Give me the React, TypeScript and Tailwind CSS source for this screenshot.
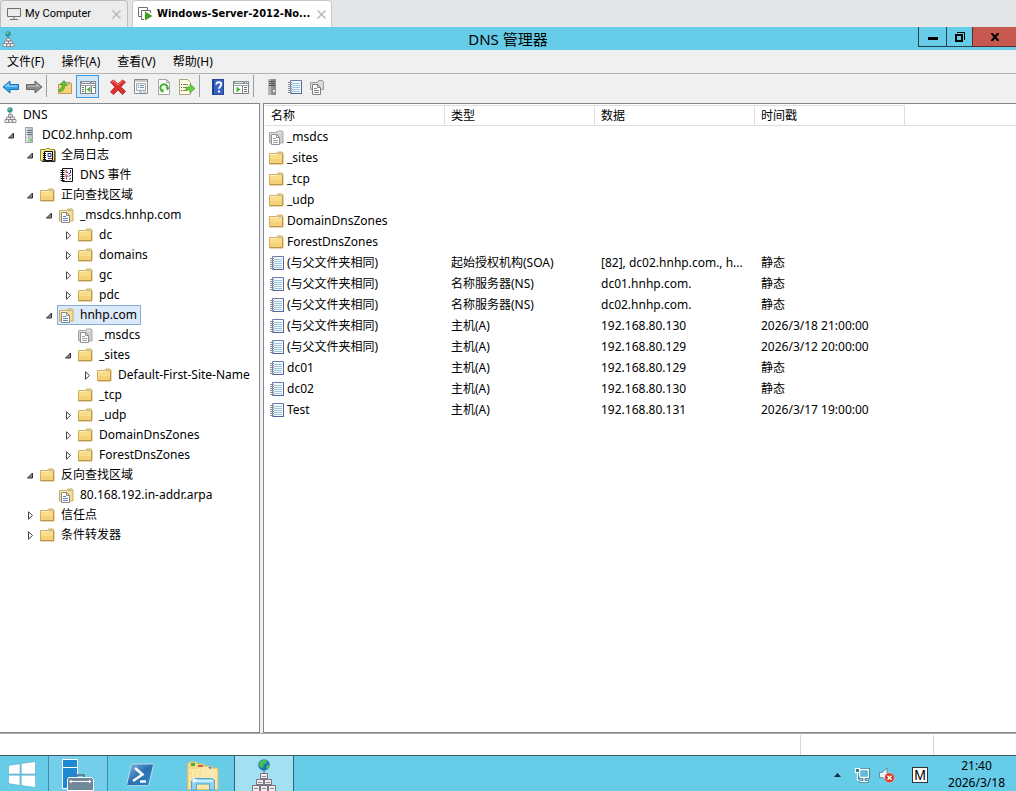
import React, { useState } from "react";
import clsx from "clsx";

type IconProps = { className?: string };

/* ---------- small icons used by the tree and the record list ---------- */

const FolderIcon = () => (
  <svg width="16" height="16" viewBox="0 0 16 16" className="shrink-0">
    <path d="M.5 3.500h7l1-1.500h4.500l1 1v11H.5z" fill="#f9dd8b" stroke="#d3ad62" />
    <path d="M9 3.500h3.500" stroke="#9fb9ba" />
    <path d="M1 4.500h6.500" stroke="#fdf0c0" />
    <path d="M1 9h12.500v4.500H1z" fill="#f5d178" />
    <path d="M13.500 4v9.500H.5" fill="none" stroke="#bb964c" />
  </svg>
);

const ZoneIcon = ({ gray }: { gray?: boolean }) => (
  <svg width="16" height="16" viewBox="0 0 16 16" className="shrink-0">
    <path
      d="M.5 3.500h7l1-1.500h4.500l1 1v11H.5z"
      fill={gray ? "#cfcfcf" : "#f6dc93"}
      stroke={gray ? "#a6a6a6" : "#cdaa60"}
    />
    <path d="M9 3.500h3.500" stroke={gray ? "#eeeeee" : "#9fb9ba"} />
    <path d="M1 4.500h6.500" stroke={gray ? "#e2e2e2" : "#fdf0c0"} />
    <path
      d="M2.500 5.500h5l3 3v7h-8z"
      fill="#fff"
      stroke={gray ? "#909090" : "#8b8a85"}
    />
    <path d="M7.500 5.500v3h3" fill="none" stroke={gray ? "#909090" : "#8b8a85"} />
    <path
      d="M4 9.500h3M4 11.500h5M4 13.500h5"
      stroke={gray ? "#a0a0a0" : "#5c86c4"}
    />
  </svg>
);

const RecordIcon = () => (
  <svg width="16" height="16" viewBox="0 0 16 16" className="shrink-0">
    <path d="M3.500 1.500h11v13h-11z" fill="#f4fbfe" stroke="#6c7bab" />
    <path d="M14.500 2v12.500H4" fill="none" stroke="#55639a" />
    <path
      d="M5 4.500h8M5 6.500h8M5 8.500h8M5 10.500h8M5 12.500h8"
      stroke="#9cc6d8"
    />
    <path
      d="M1 3.500h4M1 5.500h4M1 7.500h4M1 9.500h4M1 11.500h4M1 13.500h4"
      stroke="#8d8d96"
    />
  </svg>
);

const DnsIcon = () => (
  <svg width="16" height="16" viewBox="0 0 16 16" className="shrink-0">
    <circle cx="8" cy="3" r="2.7" fill="#2b8aa8" />
    <path d="M6 1.6l2-1 1 1.4-1.4 1.6-1.4-.4zM8.5 4l1.8-.8-.6 1.8z" fill="#63cf6f" />
    <path d="M8 6v2" stroke="#77808a" />
    <path
      d="M6.500 7.500h4v2.500h-4zM4.500 10h4v2.500h-4zM8.500 10h4v2.500h-4zM3 12.500h3.700v3H3zM6.700 12.500h3.600v3H6.700zM10.300 12.500H14v3h-3.700z"
      fill="#f0eef0"
      stroke="#8b8891"
      strokeWidth=".9"
    />
  </svg>
);

const ServerIcon = () => (
  <svg width="16" height="16" viewBox="0 0 16 16" className="shrink-0">
    <path d="M4.500.500h7v15h-7z" fill="#b9c4cb" stroke="#9aa4ab" />
    <path d="M5 1h2v14H5z" fill="#dbe2e6" />
    <path d="M6 3.500h5M6 5.500h5M6 7.500h5" stroke="#6b787f" />
    <path d="M9 12h2v2H9z" fill="#76d13a" />
  </svg>
);

const LogFolderIcon = () => (
  <svg width="16" height="16" viewBox="0 0 16 16" className="shrink-0">
    <path d="M.5 2.500h5l1-1h3l1 1h4v11H.5z" fill="#f3ea7e" stroke="#8f8f37" />
    <path d="M15 3.500v11H2" fill="none" stroke="#222" />
    <path d="M4.500 4.500h8v9h-8z" fill="#fff" stroke="#111" />
    <path d="M3 6.500h3M3 8.500h3M3 10.500h3M3 12.500h3" stroke="#111" />
    <path d="M8 6.500h3v3H8zM8 11.500h2" stroke="#2b2f9a" fill="#fff" />
    <path d="M10 11.500h2" stroke="#c22" />
  </svg>
);

const EventIcon = () => (
  <svg width="16" height="16" viewBox="0 0 16 16" className="shrink-0">
    <path d="M3.500 1.500h10v13h-10z" fill="#fff" stroke="#111" />
    <path
      d="M1.500 3.500h4M1.500 5.500h4M1.500 7.500h4M1.500 9.500h4M1.500 11.500h4M1.500 13.500h4"
      stroke="#111"
    />
    <path d="M7 3v2.500h2M7 7v3l2-1.500M7.500 10.500v2" fill="none" stroke="#c0263a" />
    <path d="M11.500 3v3l-2 1M9.500 9.500l2.500-1.500M10 12.500l2-1.500" fill="none" stroke="#2b2f9a" />
  </svg>
);

const ICONS = {
  dns: <DnsIcon />,
  server: <ServerIcon />,
  logs: <LogFolderIcon />,
  event: <EventIcon />,
  folder: <FolderIcon />,
  zone: <ZoneIcon />,
  grayZone: <ZoneIcon gray />,
  record: <RecordIcon />,
};

/* ---------- toolbar icons ---------- */

const BackIcon = () => (
  <svg width="18" height="16" viewBox="0 0 18 16">
    <path d="M1 8l7-6v3.500h8.500v5H8V14z" fill="#35a3ea" stroke="#1d6db5" />
    <path d="M2.500 7.800L7 4v2.500h8.500v1.300z" fill="#8fd3fa" />
  </svg>
);

const ForwardIcon = () => (
  <svg width="18" height="16" viewBox="0 0 18 16">
    <path d="M17 8l-7-6v3.500H1.500v5H10V14z" fill="#8c8c8c" stroke="#636363" />
    <path d="M15.500 7.800L11 4v2.500H2.500v1.300z" fill="#b5b5b5" />
  </svg>
);

const UpIcon = () => (
  <svg width="16" height="16" viewBox="0 0 16 16">
    <path d="M1.500 5.500h5l1-2h6l1 1v10h-13z" fill="#f4d27c" stroke="#c09a4d" />
    <path d="M10 5h3" stroke="#7aa7c0" />
    <path d="M2.500 12.500c3 0 5-1.500 5-6h2.500L7 1.500 3 5.500h2.300c0 3-1 4.500-3.300 5.300z" fill="#5fc63a" stroke="#3a8f22" strokeWidth=".7" />
  </svg>
);

const PaneIcon = ({ right }: { right?: boolean }) => (
  <svg width="18" height="16" viewBox="0 0 18 16">
    <path d="M1.500 2.500h15v12h-15z" fill="#fdfdfd" stroke="#7d8488" />
    <path d="M1 2h16v3H1z" fill="#8a9297" />
    <path d="M3 3.500h8" stroke="#dfe5e8" />
    <path d="M13 3.500h3" stroke="#fff" strokeDasharray="1 1" />
    <path d="M2 6.500h14" stroke="#9aa2a6" />
    {right ? (
      <>
        <path d="M10.500 7v7" stroke="#7d8488" />
        <path d="M4.500 7.500l4 3-4 3z" fill="#46b83a" />
        <path d="M12 8.500h3M12 10.500h3M12 12.500h3" stroke="#6b7377" />
      </>
    ) : (
      <>
        <path d="M6.500 7v7M12.500 7v7" stroke="#7d8488" />
        <path d="M11.500 7.500l-4 3 4 3z" fill="#46b83a" />
        <path d="M3 8.500h2M3 10.500h2M3 12.500h2M14 8.500h2" stroke="#6b7377" />
      </>
    )}
  </svg>
);

const DeleteIcon = () => (
  <svg width="18" height="16" viewBox="0 0 18 16">
    <path
      d="M1.500 3l3-2L9 5l4.500-4 3 2-4.700 5 4.700 4.500-3 3L9 11l-4.500 4.500-3-2.500L6 8z"
      fill="#e0302b"
      stroke="#b11b1b"
      strokeWidth=".8"
    />
    <path d="M3 3l1.500-1L9 6l4.500-4" fill="none" stroke="#f58a80" />
  </svg>
);

const PropertiesIcon = () => (
  <svg width="16" height="16" viewBox="0 0 16 16">
    <path d="M1.500.500h13v14h-13z" fill="#fff" stroke="#8a8a8a" />
    <path d="M2 1h12v2H2z" fill="#c9c9c9" />
    <path d="M3.500 4.500h9v7h-9z" fill="#eef4f8" stroke="#a6a6a6" />
    <path d="M5 6.500h1M5 8.500h1M7 6.500h4M7 8.500h4" stroke="#7896ab" />
    <path d="M6 13h3" stroke="#49a7d6" />
    <path d="M10 13h3" stroke="#9a9a9a" />
  </svg>
);

const RefreshIcon = () => (
  <svg width="16" height="16" viewBox="0 0 16 16">
    <path d="M2.500.5h8l3 3v12h-11z" fill="#fdfdfd" stroke="#a6a69e" />
    <path d="M10.500.5v3h3" fill="none" stroke="#a6a69e" />
    <path d="M6 11.800A3.600 3.600 0 1 1 11.600 9" fill="none" stroke="#45b031" strokeWidth="2" />
    <path d="M7.500 9.500v4l-3.300-1z" fill="#45b031" />
    <path d="M9.300 8.500h4.500l-2.200 3z" fill="#45b031" />
  </svg>
);

const ExportIcon = () => (
  <svg width="16" height="16" viewBox="0 0 16 16">
    <path d="M.5.500h8l3 3v12H.5z" fill="#fffbe2" stroke="#aaa383" />
    <path d="M2 5.500h1M2 8.500h1M2 11.500h1" stroke="#444" />
    <path d="M4 5.500h5M4 8.500h3M4 11.500h4" stroke="#837e68" />
    <path d="M7 8h4V5l5 4.500-5 4.500v-3H7z" fill="#69ce3f" stroke="#3f9d27" strokeWidth=".7" />
  </svg>
);

const HelpIcon = () => (
  <svg width="16" height="16" viewBox="0 0 16 16">
    <path d="M2 0h12v16H2z" fill="#3a62c4" />
    <path d="M2 0h2v16H2z" fill="#1f3c8c" />
    <path d="M2.500.5h11v15h-11z" fill="none" stroke="#26469c" />
    <path
      d="M6.300 5.500c0-3 5-3 5 0 0 2-2.300 2-2.300 4.300"
      fill="none"
      stroke="#fff"
      strokeWidth="1.800"
    />
    <path d="M8 11.500h2v2H8z" fill="#fff" />
  </svg>
);

const GrayServerIcon = () => (
  <svg width="16" height="16" viewBox="0 0 16 16">
    <path d="M4 0h8v16H4z" fill="#8e8e8e" />
    <path d="M4 0h3v16H4z" fill="#b4b4b4" />
    <path d="M5 2.500h6M5 4.500h6M5 6.500h6" stroke="#4f4f4f" />
    <path d="M9 11h2v2H9z" fill="#e9e9e9" />
  </svg>
);

const CopyZoneIcon = () => (
  <svg width="16" height="16" viewBox="0 0 16 16">
    <path d="M1.500 3.500h7l1-2h4l1 1v8h-13z" fill="#dadada" stroke="#9d9d9d" />
    <path d="M3.500 5.500h5l3 3v7h-8z" fill="#fff" stroke="#808080" />
    <path d="M8.500 5.500v3h3" fill="none" stroke="#808080" />
    <path d="M5 9.500h3M5 11.500h5M5 13.500h5" stroke="#8a8a8a" />
  </svg>
);

/* ---------- taskbar icons ---------- */

const WindowsLogo = () => (
  <svg width="28" height="27" viewBox="0 0 28 27">
    <path
      d="M.5 4.500L12 2.700v10.300H.500zM13.200 2.500L27.500.5V13H13.200zM.5 14.200H12v10.200L.5 22.600zM13.200 14.200h14.300v12.300l-14.300-2z"
      fill="#fff"
      stroke="#4a9dbb"
      strokeWidth=".5"
    />
  </svg>
);

const ServerManagerIcon = () => (
  <svg width="32" height="32" viewBox="0 0 32 32">
    <path d="M.5.500h15v29H.5z" fill="#1e88d2" stroke="#fff" />
    <path d="M1 8.500h14" stroke="#fff" />
    <path d="M15 18v-2h7v2" fill="none" stroke="#55707f" strokeWidth="1.500" />
    <path d="M6.500 18.500h23l2 2v11h-26v-11z" fill="#71889a" stroke="#fff" />
    <path d="M8 22.500h20" stroke="#fff" />
    <path d="M9.500 20.500l-2.500 2 2.500 2zM27 20.500l2.500 2-2.500 2z" fill="#fff" />
  </svg>
);

const PowerShellIcon = () => (
  <svg width="28" height="24" viewBox="0 0 28 24">
    <defs>
      <linearGradient id="ps" x1="0" y1="0" x2="1" y2="1">
        <stop offset="0" stopColor="#7fb9e2" />
        <stop offset=".5" stopColor="#2c6fae" />
        <stop offset="1" stopColor="#2d8bd0" />
      </linearGradient>
    </defs>
    <path
      d="M7 1h19c1 0 1.500.8 1.300 1.800L23 21c-.3 1-1 1.700-2 1.700H2c-1 0-1.500-.8-1.200-1.800L5 2.700C5.300 1.600 6 1 7 1z"
      fill="url(#ps)"
      stroke="#b9def2"
    />
    <path d="M9 5l7.500 6.500L7 18" fill="none" stroke="#fff" strokeWidth="2.600" />
    <path d="M14 18.500h6" stroke="#fff" strokeWidth="2.400" />
  </svg>
);

const ExplorerIcon = () => (
  <svg width="34" height="30" viewBox="0 0 34 30">
    <path d="M1.500 3l2-2h7l2 2h5l1 2h6l2 2h5.500v21.500h-30.500z" fill="#f3d983" stroke="#dcbd6c" />
    <path d="M5 2h4v3H5z" fill="#3fae4a" />
    <path d="M12 4h5v2h-5z" fill="#d35a4b" />
    <path d="M21 6h4v2h-4z" fill="#3a8fc8" />
    <path d="M3 8h9l2-2h8l2 2h7v20H3z" fill="#fae9ab" />
    <path d="M5 10v17M9 9.500v9M14 9v9" stroke="#f0d587" />
    <path d="M5.500 29V19l3-1.500h17l3 1.500v10h-5v-6H10.500v6z" fill="#8fd3f0" stroke="#4fa6cf" />
    <path d="M7 20h20" stroke="#e1f6ff" strokeWidth="1.500" />
    <path d="M8 16v6M5 19h6" stroke="#fff" />
  </svg>
);

const DnsTaskIcon = () => (
  <svg width="26" height="33" viewBox="0 0 26 33">
    <circle cx="13" cy="6" r="5.800" fill="#1f6fc0" />
    <path d="M9 2.500l4-2 3 1-1 3-3 1.500 1 2-3 1-2.500-3zM15 7l3.500-2-.5 4-2.500 2z" fill="#43c251" />
    <path d="M13 12v2" stroke="#667" />
    <g fill="#f1edf1" stroke="#77717c">
      <path d="M9.500 14.500h7v5h-7z" />
      <path d="M5.500 20.500h7v5h-7zM13.500 20.500h7v5h-7z" />
      <path d="M1.500 26.500h7v6h-7zM9.500 26.500h7v6h-7zM17.500 26.500h7v6h-7z" />
    </g>
    <path d="M11 17.500h4M7 23.500h4M15 23.500h4M3 29.500h4M11 29.500h4M19 29.500h4" stroke="#8d8792" />
  </svg>
);

const NetworkIcon = () => (
  <svg width="16" height="16" viewBox="0 0 16 16">
    <path d="M5.500 2.500h9v8h-9z" fill="#5fb9da" stroke="#23586c" strokeWidth="2.600" />
    <path d="M10 11v3M5.500 14.500h9" stroke="#23586c" strokeWidth="2.600" />
    <path d="M5.500 2.500h9v8h-9z" fill="#5fb9da" stroke="#fff" strokeWidth="1.300" />
    <path d="M10 11v3M6 14.500h8" stroke="#fff" strokeWidth="1.300" />
    <path d="M1.500 1.500h4v4h-4zM3.500 6v7h3" fill="#2b6f8c" stroke="#fff" strokeWidth="1.200" />
  </svg>
);

const MutedIcon = () => (
  <svg width="18" height="16" viewBox="0 0 18 16">
    <path d="M1.500 5.500h3L9 .8v14l-4.500-4.300h-3z" fill="#eef7fb" stroke="#5b7784" strokeWidth=".8" />
    <circle cx="11.500" cy="10.800" r="4.900" fill="#d8392c" stroke="#f4c9c3" strokeWidth=".6" />
    <path d="M9.500 8.800l4 4M13.500 8.800l-4 4" stroke="#fff" strokeWidth="1.500" />
  </svg>
);

/* ---------- data ---------- */

type TreeNode = {
  id: string;
  label: string;
  icon: keyof typeof ICONS;
  closed?: boolean;
  children?: TreeNode[];
};

const tree: TreeNode[] = [
  {
    id: "dc02",
    label: "DC02.hnhp.com",
    icon: "server",
    children: [
      {
        id: "logs",
        label: "全局日志",
        icon: "logs",
        children: [{ id: "events", label: "DNS 事件", icon: "event" }],
      },
      {
        id: "forward",
        label: "正向查找区域",
        icon: "folder",
        children: [
          {
            id: "msdcs-zone",
            label: "_msdcs.hnhp.com",
            icon: "zone",
            children: [
              { id: "dc", label: "dc", icon: "folder", closed: true },
              { id: "domains", label: "domains", icon: "folder", closed: true },
              { id: "gc", label: "gc", icon: "folder", closed: true },
              { id: "pdc", label: "pdc", icon: "folder", closed: true },
            ],
          },
          {
            id: "hnhp",
            label: "hnhp.com",
            icon: "zone",
            children: [
              { id: "msdcs", label: "_msdcs", icon: "grayZone" },
              {
                id: "sites",
                label: "_sites",
                icon: "folder",
                children: [
                  {
                    id: "default-site",
                    label: "Default-First-Site-Name",
                    icon: "folder",
                    closed: true,
                  },
                ],
              },
              { id: "tcp", label: "_tcp", icon: "folder" },
              { id: "udp", label: "_udp", icon: "folder", closed: true },
              { id: "ddz", label: "DomainDnsZones", icon: "folder", closed: true },
              { id: "fdz", label: "ForestDnsZones", icon: "folder", closed: true },
            ],
          },
        ],
      },
      {
        id: "reverse",
        label: "反向查找区域",
        icon: "folder",
        children: [{ id: "arpa", label: "80.168.192.in-addr.arpa", icon: "zone" }],
      },
      { id: "trust", label: "信任点", icon: "folder", closed: true },
      { id: "forwarders", label: "条件转发器", icon: "folder", closed: true },
    ],
  },
];

type Row = [keyof typeof ICONS, string, string, string, string];

const rows: Row[] = [
  ["grayZone", "_msdcs", "", "", ""],
  ["folder", "_sites", "", "", ""],
  ["folder", "_tcp", "", "", ""],
  ["folder", "_udp", "", "", ""],
  ["folder", "DomainDnsZones", "", "", ""],
  ["folder", "ForestDnsZones", "", "", ""],
  ["record", "(与父文件夹相同)", "起始授权机构(SOA)", "[82], dc02.hnhp.com., h...", "静态"],
  ["record", "(与父文件夹相同)", "名称服务器(NS)", "dc01.hnhp.com.", "静态"],
  ["record", "(与父文件夹相同)", "名称服务器(NS)", "dc02.hnhp.com.", "静态"],
  ["record", "(与父文件夹相同)", "主机(A)", "192.168.80.130", "2026/3/18 21:00:00"],
  ["record", "(与父文件夹相同)", "主机(A)", "192.168.80.129", "2026/3/12 20:00:00"],
  ["record", "dc01", "主机(A)", "192.168.80.129", "静态"],
  ["record", "dc02", "主机(A)", "192.168.80.130", "静态"],
  ["record", "Test", "主机(A)", "192.168.80.131", "2026/3/17 19:00:00"],
];

/* ---------- components ---------- */

const Arrow = ({ open }: { open: boolean }) => (
  <svg width="9" height="9" viewBox="0 0 9 9">
    {open ? (
      <path d="M6.500 2v5h-5z" fill="#8a8a8a" stroke="#333" />
    ) : (
      <path d="M2.500.8v7.400l4-3.700z" fill="#fff" stroke="#444" />
    )}
  </svg>
);

const TreeItem = ({
  node,
  selected,
  onSelect,
}: {
  node: TreeNode;
  selected: string;
  onSelect: (id: string) => void;
}) => {
  const [open, setOpen] = useState(!node.closed);
  const expandable = node.closed || !!node.children;

  return (
    <li>
      <div className="flex h-5 items-center">
        <div className="flex w-[19px] shrink-0 items-center pl-[7px]">
          {expandable && (
            <button aria-label={`${node.label} toggle`} onClick={() => setOpen(!open)}>
              <Arrow open={open} />
            </button>
          )}
        </div>
        <button
          onClick={() => onSelect(node.id)}
          className={clsx(
            "flex h-5 items-center gap-[5px] border pl-px pr-[3px] whitespace-nowrap",
            selected === node.id
              ? "border-[#84acdd] bg-[#dbe9f9]"
              : "border-transparent"
          )}
        >
          {ICONS[node.icon]}
          {node.label}
        </button>
      </div>
      {open && node.children && (
        <ul className="pl-[19px]">
          {node.children.map((child) => (
            <TreeItem
              key={child.id}
              node={child}
              selected={selected}
              onSelect={onSelect}
            />
          ))}
        </ul>
      )}
    </li>
  );
};

const ToolButton = ({
  label,
  active,
  narrow,
  children,
}: {
  label: string;
  active?: boolean;
  narrow?: boolean;
  children: React.ReactNode;
}) => (
  <button
    aria-label={label}
    className={clsx(
      "flex h-[23px] items-center justify-center border",
      narrow ? "w-[22px]" : "w-[23px]",
      active ? "border-[#3c9be0] bg-[#cfe6f8]" : "border-transparent"
    )}
  >
    {children}
  </button>
);

const Separator = () => <div className="ml-px mr-1.5 h-[22px] w-px bg-[#a0a0a0]" />;

const CloseMark = ({ className }: IconProps) => (
  <svg width="9" height="9" viewBox="0 0 9 9" className={className}>
    <path d="M.5.500l8 8M8.500.500l-8 8" stroke="#b9b9b9" strokeWidth="1.500" />
  </svg>
);

const App = () => {
  const [selected, setSelected] = useState("hnhp");

  return (
    <div className="flex h-screen flex-col overflow-hidden bg-[#f0f0f0] font-['Noto_Sans','Noto_Sans_CJK_SC',sans-serif] text-xs leading-5 text-black">
      {/* machine tabs */}
      <div className="flex h-[27px] shrink-0 bg-[#e4e5e7]">
        <div className="flex w-32 items-center rounded-t border border-b-0 border-[#bcbcbc] bg-[#ececed] px-1.5 font-['Roboto',sans-serif] text-[11px]">
          <svg width="14" height="12" viewBox="0 0 14 12" className="shrink-0">
            <path d="M.5.500h13v8H.500zM3 11.500h8M7 9v2" fill="none" stroke="#6e6e6e" />
          </svg>
          <button className="flex-1 pl-1 text-left whitespace-nowrap">My Computer</button>
          <button aria-label="close My Computer">
            <CloseMark />
          </button>
        </div>
        <div className="ml-1 flex w-[200px] items-center rounded-t border border-b-0 border-[#c8c8c8] bg-white px-[5px] font-['DejaVu_Sans_Condensed','DejaVu_Sans',sans-serif] text-[11px] font-bold">
          <svg width="15" height="14" viewBox="0 0 15 14" className="shrink-0">
            <path d="M3 9.500H.500v-9h9V3" fill="none" stroke="#6e6e6e" />
            <path d="M6 12.500H3.500v-9h9V6" fill="none" stroke="#6e6e6e" />
            <path d="M7 4.500l7.500 4.500L7 13.500z" fill="#3fa01e" />
          </svg>
          <button className="flex-1 pl-1 text-left whitespace-nowrap">
            Windows-Server-2012-No...
          </button>
          <button aria-label="close Windows-Server-2012">
            <CloseMark />
          </button>
        </div>
      </div>

      {/* title bar */}
      <header className="grid h-[23px] shrink-0 grid-cols-[1fr_auto_1fr] bg-[#66cce8]">
        <div className="flex items-center">
          <DnsIcon />
        </div>
        <h1 className="self-center text-[15px]">DNS 管理器</h1>
        <div className="flex h-[20px] justify-end">
          <button
            aria-label="minimize"
            className="flex w-7 items-center justify-center border-b border-l border-[#23434f]"
          >
            <svg width="10" height="10" viewBox="0 0 10 10">
              <path d="M0 5h10v3H0z" fill="#000" />
            </svg>
          </button>
          <button
            aria-label="restore"
            className="flex w-[26px] items-center justify-center border-b border-l border-[#23434f]"
          >
            <svg width="10" height="10" viewBox="0 0 10 10">
              <path d="M1 3h6v6H1z" fill="none" stroke="#000" strokeWidth="2" />
              <path d="M2 .5h7.500V8" fill="none" stroke="#000" />
            </svg>
          </button>
          <button
            aria-label="close"
            className="flex w-11 items-center justify-center border-b border-l border-[#5b2d2b] bg-[#c6584f]"
          >
            <svg width="10" height="8" viewBox="0 0 10 8">
              <path d="M1.500 0l7 8M8.500 0l-7 8" stroke="#000" strokeWidth="2" />
            </svg>
          </button>
        </div>
      </header>

      {/* menu */}
      <nav className="flex h-6 shrink-0 items-center gap-[17px] border-b border-[#b4b4b4] pl-[7px]">
        <button>文件(F)</button>
        <button>操作(A)</button>
        <button>查看(V)</button>
        <button>帮助(H)</button>
      </nav>

      {/* toolbar */}
      <div className="flex h-[29px] shrink-0 items-start pt-px">
        <ToolButton narrow label="back"><BackIcon /></ToolButton>
        <ToolButton label="forward"><ForwardIcon /></ToolButton>
        <Separator />
        <ToolButton label="up"><UpIcon /></ToolButton>
        <ToolButton active label="console tree"><PaneIcon /></ToolButton>
        <div className="w-[7px]" />
        <ToolButton label="delete"><DeleteIcon /></ToolButton>
        <ToolButton label="properties"><PropertiesIcon /></ToolButton>
        <ToolButton label="refresh"><RefreshIcon /></ToolButton>
        <ToolButton label="export"><ExportIcon /></ToolButton>
        <Separator />
        <ToolButton label="help"><HelpIcon /></ToolButton>
        <ToolButton label="action pane"><PaneIcon right /></ToolButton>
        <Separator />
        <ToolButton label="server"><GrayServerIcon /></ToolButton>
        <ToolButton label="record"><RecordIcon /></ToolButton>
        <ToolButton narrow label="zone"><CopyZoneIcon /></ToolButton>
      </div>

      {/* tree + record list */}
      <main className="flex min-h-0 flex-1 gap-[3px]">
        <section className="w-[260px] shrink-0 overflow-hidden border border-l-0 border-[#828790] bg-white pt-px">
          <button className="flex h-5 items-center gap-[5px] pl-0.5">
            <DnsIcon />
            DNS
          </button>
          <ul>
            {tree.map((node) => (
              <TreeItem
                key={node.id}
                node={node}
                selected={selected}
                onSelect={setSelected}
              />
            ))}
          </ul>
        </section>

        <section className="min-w-0 flex-1 overflow-hidden border border-r-0 border-[#828790] bg-white pl-px pt-px">
          <table className="w-full table-fixed border-separate border-spacing-0 text-left">
            <colgroup>
              <col className="w-[180px]" />
              <col className="w-[150px]" />
              <col className="w-[160px]" />
              <col className="w-[150px]" />
              <col />
            </colgroup>
            <thead>
              <tr className="h-[21px]">
                {["名称", "类型", "数据", "时间戳"].map((name) => (
                  <th
                    key={name}
                    className="border-y border-r border-[#dedfe1] p-0 pl-1.5 font-normal leading-[19px]"
                  >
                    {name}
                  </th>
                ))}
                <th className="border-b border-[#dedfe1] p-0" />
              </tr>
            </thead>
            <tbody>
              {rows.map(([icon, name, ...cells], i) => (
                <tr key={i} className="h-[21px]">
                  <td className="p-0 pl-1">
                    <div className="flex items-center gap-0.5 whitespace-nowrap">
                      {ICONS[icon]}
                      {name}
                    </div>
                  </td>
                  {cells.map((cell, j) => (
                    <td key={j} className="p-0 pl-1.5 whitespace-nowrap">
                      {cell}
                    </td>
                  ))}
                  <td />
                </tr>
              ))}
            </tbody>
          </table>
        </section>
      </main>

      {/* status bar */}
      <div className="flex h-[22px] shrink-0 border-t border-[#a9a9a9] bg-white pt-px">
        <div className="flex-1 border-r border-[#d5d5d5]" />
        <div className="w-[133px] border-r border-[#d5d5d5]" />
        <div className="w-[82px]" />
      </div>

      {/* taskbar */}
      <footer className="flex h-9 shrink-0 overflow-hidden border-t border-[#3f5961] bg-[#66cce8]">
        <button aria-label="start" className="flex w-12 items-start pl-2 pt-[5px]">
          <WindowsLogo />
        </button>
        <button
          aria-label="server manager"
          className="flex w-[60px] items-start justify-center border-x border-[#3f8ba3] bg-[#72ceea] pt-[3px]"
        >
          <ServerManagerIcon />
        </button>
        <button aria-label="powershell" className="flex w-16 items-start justify-center pt-[7px]">
          <PowerShellIcon />
        </button>
        <button aria-label="explorer" className="flex w-[62px] items-start justify-center pt-[5px]">
          <ExplorerIcon />
        </button>
        <button
          aria-label="dns"
          className="flex w-[60px] items-start justify-center border-x border-[#2f6677] bg-[#a3e0f1] pt-[3px]"
        >
          <DnsTaskIcon />
        </button>
        <div className="ml-auto flex items-start">
          <button aria-label="hidden icons" className="px-[9px] pt-[17px]">
            <svg width="7" height="4" viewBox="0 0 7 4">
              <path d="M0 4l3.500-4L7 4z" fill="#12303b" />
            </svg>
          </button>
          <button aria-label="network" className="mx-1 pt-[11px]">
            <NetworkIcon />
          </button>
          <button aria-label="volume" className="mx-1 pt-[11px]">
            <MutedIcon />
          </button>
          <button
            aria-label="input method"
            className="mt-[11px] ml-3 h-4 w-4 border border-[#333] bg-white font-['Liberation_Sans',sans-serif] text-sm leading-[14px]"
          >
            M
          </button>
          <div className="pt-px pr-[11px] pl-5 text-center leading-[17px]">
            <div>21:40</div>
            <div>2026/3/18</div>
          </div>
        </div>
      </footer>
    </div>
  );
};

export default App;
